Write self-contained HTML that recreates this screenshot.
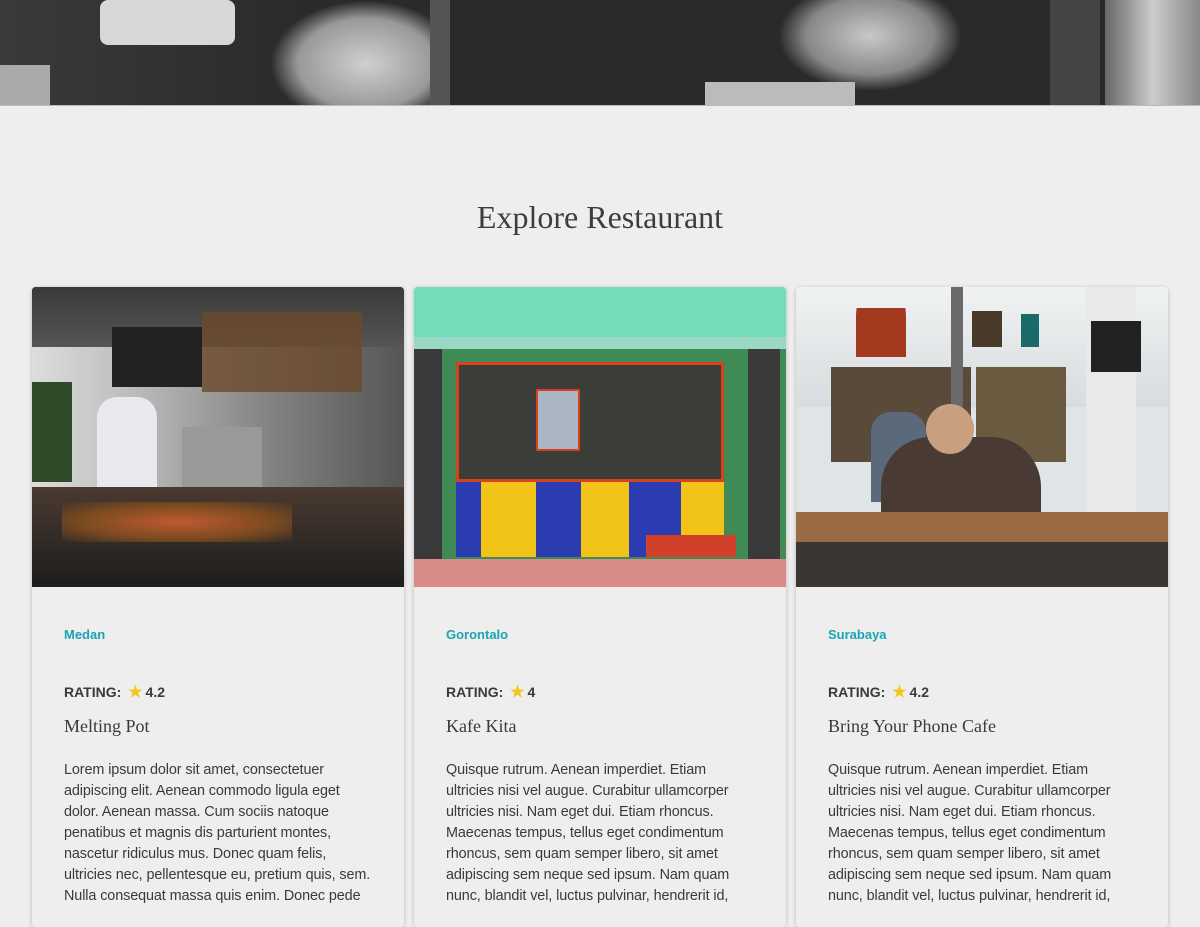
<!DOCTYPE html>
<html><head><meta charset="utf-8"><style>
*{margin:0;padding:0;box-sizing:border-box}
body{width:1200px;height:900px;overflow:hidden;background:#eeeeee;font-family:"Liberation Sans",sans-serif;color:#3a3a3a}
.hero{position:absolute;left:0;top:0;width:1200px;height:106px;background:#2a2a2a;overflow:hidden;border-bottom:1px solid #bbb}
.hero div{position:absolute}
h1{position:absolute;top:199px;width:1200px;text-align:center;font-family:"Liberation Serif",serif;font-weight:normal;font-size:32px;color:#3d3d3d}
.card{position:absolute;top:287px;width:372px;height:640px;background:#eeeeee;border-radius:4px;box-shadow:0 1px 5px rgba(0,0,0,.22);overflow:hidden}
.img{height:300px;position:relative;overflow:hidden}
.img div{position:absolute}
.city{position:absolute;left:32px;top:340px;font-size:13px;font-weight:bold;color:#1aa3b3}
.rat{position:absolute;left:32px;top:395px;font-size:14px;font-weight:bold;color:#3a3a3a}
.rat .s{color:#f5c518;font-size:16px;margin:0 3px}
.name{position:absolute;left:32px;top:429px;font-size:18px;color:#3a3a3a;font-family:"Liberation Serif",serif}
.desc{position:absolute;left:32px;top:473px;font-size:14.4px;line-height:21px;white-space:nowrap;letter-spacing:-0.1px;color:#3a3a3a}
</style></head><body>
<div class="hero">
<div style="left:0;top:0;width:300px;height:106px;background:linear-gradient(90deg,#3a3a3a,#2b2b2b)"></div>
<div style="left:100px;top:0;width:135px;height:45px;background:#d8d8d8;border-radius:8px"></div>
<div style="left:270px;top:0;width:160px;height:106px;background:radial-gradient(ellipse at 60% 60%,#d0d0d0,#999 50%,transparent 70%)"></div>
<div style="left:430px;top:0;width:20px;height:106px;background:#555"></div>
<div style="left:780px;top:0;width:180px;height:90px;background:radial-gradient(ellipse at 50% 40%,#c8c8c8,#888 50%,transparent 72%)"></div>
<div style="left:705px;top:82px;width:150px;height:24px;background:#bbb"></div>
<div style="left:1050px;top:0;width:50px;height:106px;background:#444"></div>
<div style="left:1105px;top:0;width:95px;height:106px;background:linear-gradient(90deg,#666,#ccc,#888)"></div>
<div style="left:0;top:65px;width:50px;height:41px;background:#aaa"></div>
</div>
<h1>Explore Restaurant</h1>

<div class="card" style="left:32px">
<div class="img" style="background:#2a2b2a">
<div style="left:0;top:0;width:372px;height:60px;background:linear-gradient(#3a3a3a,#555)"></div>
<div style="left:0;top:60px;width:372px;height:140px;background:linear-gradient(90deg,#ddd,#b8b8b8 30%,#888 60%,#555)"></div>
<div style="left:80px;top:40px;width:90px;height:60px;background:#222"></div>
<div style="left:170px;top:25px;width:160px;height:80px;background:#6b4a2a;opacity:.8"></div>
<div style="left:65px;top:110px;width:60px;height:100px;background:#e8eaf0;border-radius:20px 20px 0 0"></div>
<div style="left:150px;top:140px;width:80px;height:60px;background:#999"></div>
<div style="left:0;top:95px;width:40px;height:100px;background:#2e4a28"></div>
<div style="left:0;top:200px;width:372px;height:100px;background:linear-gradient(#4a3a30,#1d1d1d)"></div>
<div style="left:30px;top:215px;width:230px;height:40px;background:radial-gradient(#c05a30,#7a4a20 60%,transparent)"></div>
</div>
<div class="city">Medan</div>
<div class="rat">RATING: <span class="s">★</span>4.2</div>
<div class="name">Melting Pot</div>
<div class="desc">Lorem ipsum dolor sit amet, consectetuer<br>adipiscing elit. Aenean commodo ligula eget<br>dolor. Aenean massa. Cum sociis natoque<br>penatibus et magnis dis parturient montes,<br>nascetur ridiculus mus. Donec quam felis,<br>ultricies nec, pellentesque eu, pretium quis, sem.<br>Nulla consequat massa quis enim. Donec pede</div>
</div>

<div class="card" style="left:414px">
<div class="img" style="background:#6fd8b0">
<div style="left:0;top:0;width:372px;height:50px;background:#74dcb8"></div>
<div style="left:0;top:50px;width:372px;height:12px;background:#9ad8c4"></div>
<div style="left:0;top:62px;width:372px;height:210px;background:#3f8a55"></div>
<div style="left:0;top:62px;width:28px;height:210px;background:#3a3a3a"></div>
<div style="left:334px;top:62px;width:32px;height:210px;background:#3a3a3a"></div>
<div style="left:42px;top:75px;width:268px;height:120px;background:#3a3d38;border:3px solid #d8401e"></div>
<div style="left:122px;top:102px;width:44px;height:62px;background:#aab6c4;border:2px solid #d8401e"></div>
<div style="left:42px;top:195px;width:268px;height:75px;background:#f2c418"></div>
<div style="left:42px;top:195px;width:25px;height:75px;background:#2a3cb0"></div>
<div style="left:122px;top:195px;width:45px;height:75px;background:#2a3cb0"></div>
<div style="left:215px;top:195px;width:52px;height:75px;background:#2a3cb0"></div>
<div style="left:232px;top:248px;width:90px;height:22px;background:#d0402a"></div>
<div style="left:0;top:272px;width:372px;height:28px;background:#d88a88"></div>
</div>
<div class="city">Gorontalo</div>
<div class="rat">RATING: <span class="s">★</span>4</div>
<div class="name">Kafe Kita</div>
<div class="desc">Quisque rutrum. Aenean imperdiet. Etiam<br>ultricies nisi vel augue. Curabitur ullamcorper<br>ultricies nisi. Nam eget dui. Etiam rhoncus.<br>Maecenas tempus, tellus eget condimentum<br>rhoncus, sem quam semper libero, sit amet<br>adipiscing sem neque sed ipsum. Nam quam<br>nunc, blandit vel, luctus pulvinar, hendrerit id,</div>
</div>

<div class="card" style="left:796px">
<div class="img" style="background:#dfe4e6">
<div style="left:0;top:0;width:372px;height:120px;background:linear-gradient(#f0f2f3,#d8dcde)"></div>
<div style="left:35px;top:80px;width:140px;height:95px;background:#5a4a3a"></div>
<div style="left:180px;top:80px;width:90px;height:95px;background:#6a5a40"></div>
<div style="left:155px;top:0;width:12px;height:220px;background:#6a6a6a"></div>
<div style="left:290px;top:0;width:50px;height:230px;background:#e8eaea"></div>
<div style="left:60px;top:0;width:50px;height:70px;background:linear-gradient(transparent 30%,#a33a20 30%);border-radius:40% 40% 0 0"></div>
<div style="left:176px;top:0;width:30px;height:60px;background:linear-gradient(transparent 40%,#4a3a2a 40%)"></div>
<div style="left:225px;top:0;width:18px;height:60px;background:linear-gradient(transparent 45%,#1a6a6a 45%)"></div>
<div style="left:295px;top:0;width:50px;height:85px;background:linear-gradient(transparent 40%,#222 40%);border-radius:40% 40% 0 0"></div>
<div style="left:75px;top:125px;width:55px;height:90px;background:#5a6a7a;border-radius:20px 20px 0 0"></div>
<div style="left:85px;top:150px;width:160px;height:150px;background:#4a3a34;border-radius:50px 50px 0 0"></div>
<div style="left:130px;top:117px;width:48px;height:50px;background:#c8a080;border-radius:50%"></div>
<div style="left:0;top:225px;width:372px;height:30px;background:#9a6a44"></div>
<div style="left:0;top:255px;width:372px;height:45px;background:#3a3632"></div>
</div>
<div class="city">Surabaya</div>
<div class="rat">RATING: <span class="s">★</span>4.2</div>
<div class="name">Bring Your Phone Cafe</div>
<div class="desc">Quisque rutrum. Aenean imperdiet. Etiam<br>ultricies nisi vel augue. Curabitur ullamcorper<br>ultricies nisi. Nam eget dui. Etiam rhoncus.<br>Maecenas tempus, tellus eget condimentum<br>rhoncus, sem quam semper libero, sit amet<br>adipiscing sem neque sed ipsum. Nam quam<br>nunc, blandit vel, luctus pulvinar, hendrerit id,</div>
</div>
</body></html>
